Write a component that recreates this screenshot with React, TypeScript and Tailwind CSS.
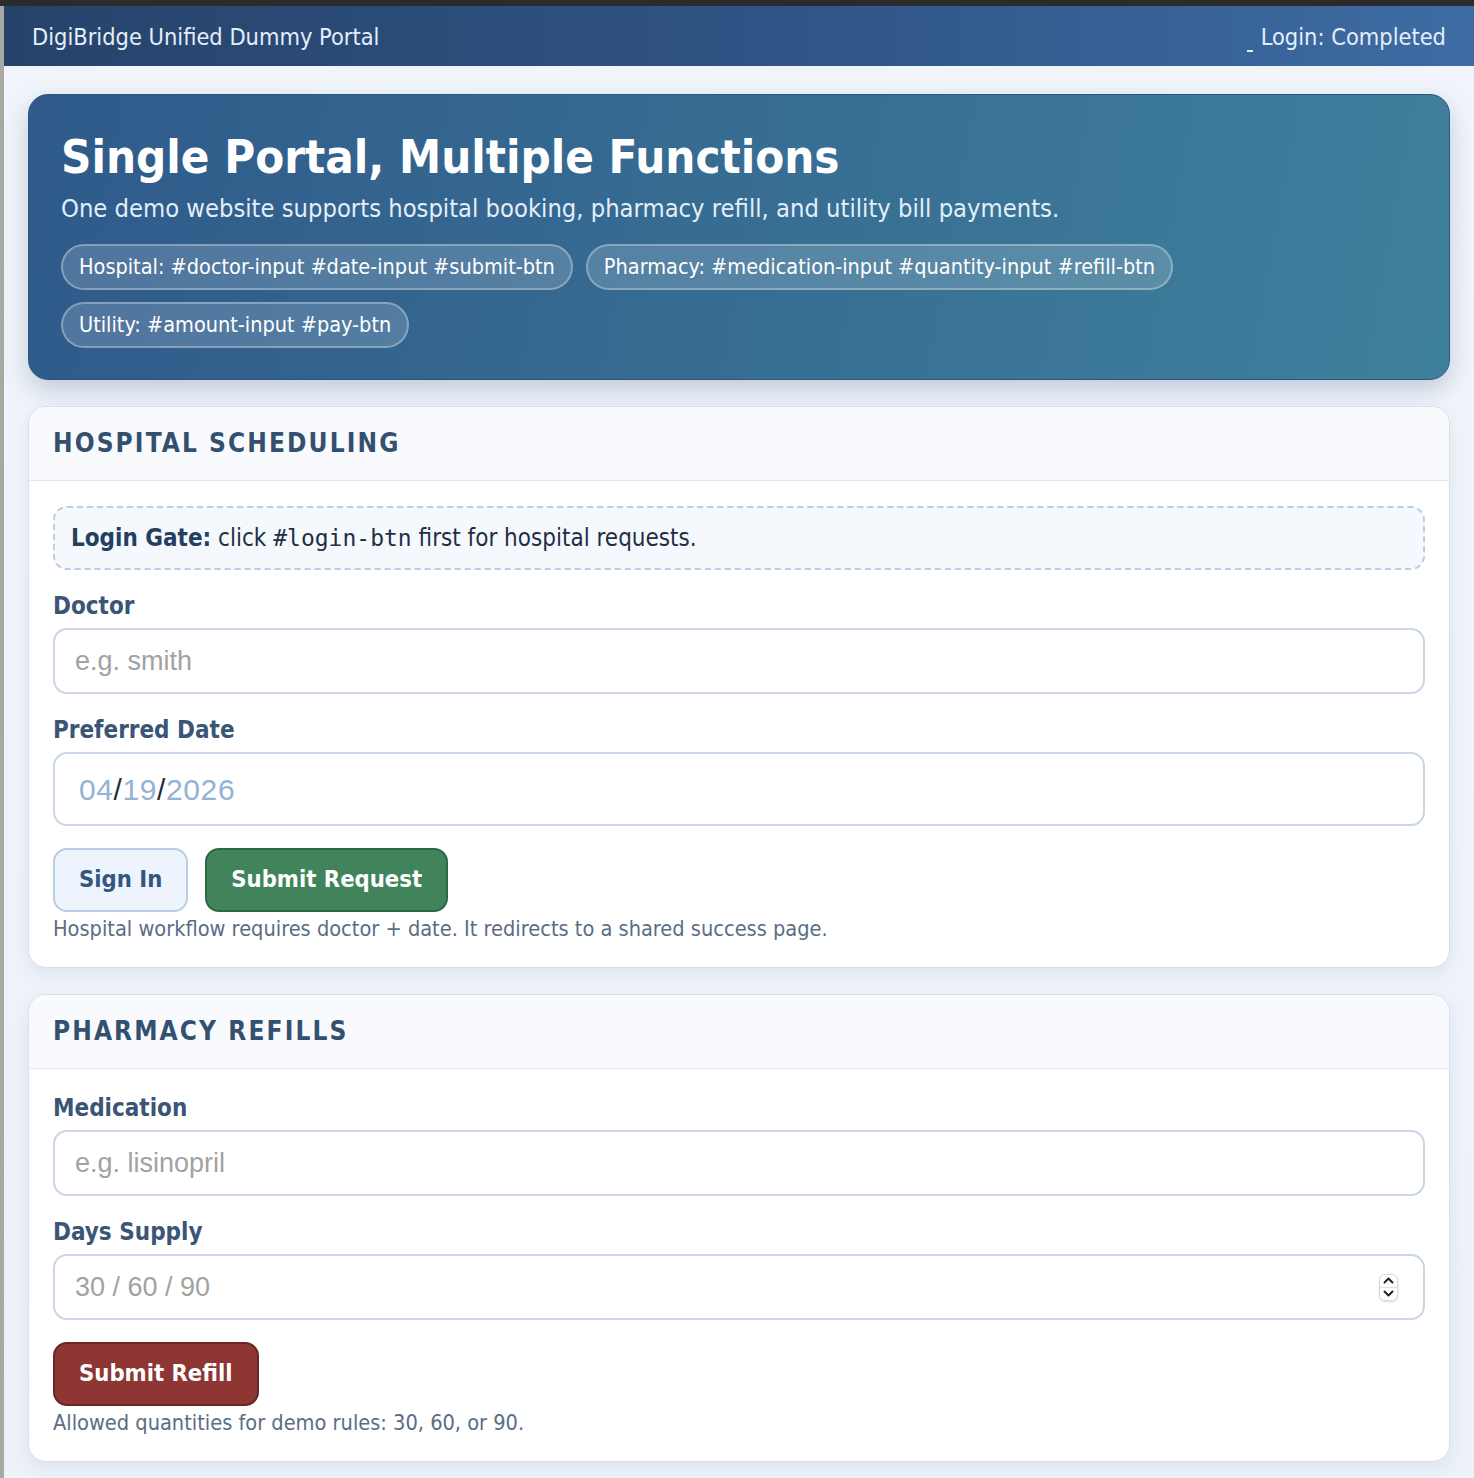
import { useState } from 'react';

const pills = [
  'Hospital: #doctor-input #date-input #submit-btn',
  'Pharmacy: #medication-input #quantity-input #refill-btn',
  'Utility: #amount-input #pay-btn',
];

function SectionCard({ title, bodyTop, children }: { title: string; bodyTop: string; children: React.ReactNode }) {
  return (
    <section className="rounded-[18px] border border-[#d6e0ec] bg-white shadow-[0_6px_18px_rgba(30,60,100,0.08)] overflow-hidden">
      <div className="h-[74px] flex items-center px-6 bg-[#f8fafd] border-b border-[#e0e8f1]">
        <h2 className="text-[26px] font-bold tracking-[2.1px] text-[#33506f] uppercase">{title}</h2>
      </div>
      <div className={`px-6 pb-6 flex flex-col ${bodyTop}`}>{children}</div>
    </section>
  );
}

function Field({ label, children }: { label: string; children: React.ReactNode }) {
  return (
    <div className="flex flex-col gap-[7px]">
      <label className="text-[24px] leading-[30px] font-bold text-[#3a5576]">{label}</label>
      {children}
    </div>
  );
}

function TextInput({ placeholder }: { placeholder: string }) {
  const [value, setValue] = useState('');
  return (
    <input
      value={value}
      onChange={(e) => setValue(e.target.value)}
      placeholder={placeholder}
      className="h-[66px] w-full rounded-[14px] border-2 border-[#c9d6e6] bg-white px-5 text-[27px] font-['Liberation_Sans',sans-serif] text-[#1f2d3d] placeholder:text-[#a2a2a2] outline-none"
    />
  );
}

function Spinner() {
  return (
    <div className="w-[19px] h-[27px] rounded-[6px] border border-[#dcdcdc] bg-white shadow-[0_1px_2px_rgba(0,0,0,0.15)] flex flex-col">
      <div className="flex-1 flex items-center justify-center border-b border-[#e2e2e2]">
        <svg width="11" height="7" viewBox="0 0 11 7" fill="none">
          <path d="M1.5 5.5 L5.5 1.5 L9.5 5.5" stroke="#222" strokeWidth="2" strokeLinecap="round" strokeLinejoin="round" />
        </svg>
      </div>
      <div className="flex-1 flex items-center justify-center">
        <svg width="11" height="7" viewBox="0 0 11 7" fill="none">
          <path d="M1.5 1.5 L5.5 5.5 L9.5 1.5" stroke="#222" strokeWidth="2" strokeLinecap="round" strokeLinejoin="round" />
        </svg>
      </div>
    </div>
  );
}

export default function App() {
  return (
    <div className="min-h-[1478px] bg-[#2b2b2b] pt-[6px] font-['DejaVu_Sans_Condensed','DejaVu_Sans',sans-serif]">
      <div className="min-h-[1472px] border-l-4 border-[#a9a9a3] bg-[linear-gradient(180deg,#f1f5fb_0%,#edf2f8_100%)]">
        {/* top bar */}
        <header className="h-[60px] flex items-center justify-between pl-7 pr-7 pt-[3px] bg-[linear-gradient(90deg,#26436a_0%,#2f5384_50%,#3e6ca3_100%)] text-[#e4eefa]">
          <span className="text-[23.4px]">DigiBridge Unified Dummy Portal</span>
          <div className="flex items-end">
            <span className="w-[6px] h-[2px] bg-[#e4eefa] mr-2 mb-[3px]" />
            <span className="text-[23.4px]">Login: Completed</span>
          </div>
        </header>

        <main className="px-6 pt-7 pb-4 flex flex-col gap-[26px]">
          {/* hero */}
          <div className="rounded-[20px] bg-[linear-gradient(100deg,#2f5a8a_0%,#376d93_50%,#3f809c_100%)] border border-[#2c5680] shadow-[0_10px_24px_rgba(30,60,100,0.22)] px-8 pt-[33px] pb-[31px] text-white">
            <h1 className="text-[47px] leading-[58px] font-bold">Single Portal, Multiple Functions</h1>
            <p className="text-[25.3px] leading-[32px] text-[#e3eef9] mt-[7px]">
              One demo website supports hospital booking, pharmacy refill, and utility bill payments.
            </p>
            <div className="flex flex-wrap gap-x-[13px] gap-y-3 mt-[19px]">
              {pills.map((p) => (
                <span
                  key={p}
                  className="h-[46px] inline-flex items-center rounded-full border-2 border-[rgba(255,255,255,0.3)] bg-[rgba(255,255,255,0.16)] px-4 text-[21.5px] text-white"
                >
                  {p}
                </span>
              ))}
            </div>
          </div>

          <SectionCard title="Hospital Scheduling" bodyTop="pt-[25px]">
            <div className="h-[64px] flex items-center rounded-[14px] border-2 border-dashed border-[#bccfe2] bg-[#f5f9fe] px-4 text-[24px] text-[#1f2f44]">
              <span>
                <b className="text-[#23405f]">Login Gate:</b> click{' '}
                <code className="font-['DejaVu_Sans_Mono',monospace] text-[23px]">#login-btn</code> first for hospital
                requests.
              </span>
            </div>
            <div className="mt-[21px]">
              <Field label="Doctor">
                <TextInput placeholder="e.g. smith" />
              </Field>
            </div>
            <div className="mt-[21px]">
              <Field label="Preferred Date">
                <div className="h-[74px] flex items-center rounded-[14px] border-2 border-[#c9d6e6] bg-white px-6 text-[30px] tracking-[0.6px] font-['Liberation_Sans',sans-serif]">
                  <span className="text-[#93b2d5]">04</span>
                  <span className="text-[#1f2d3d]">/</span>
                  <span className="text-[#93b2d5]">19</span>
                  <span className="text-[#1f2d3d]">/</span>
                  <span className="text-[#93b2d5]">2026</span>
                </div>
              </Field>
            </div>
            <div className="mt-[22px] flex gap-[17px]">
              <button className="h-[64px] px-6 rounded-[14px] border-2 border-[#b9cde6] bg-[#edf4fe] text-[23.6px] font-bold text-[#33567f]">
                Sign In
              </button>
              <button className="h-[64px] px-6 rounded-[14px] border-2 border-[#2d6845] bg-[#41845b] text-[23.6px] font-bold text-white">
                Submit Request
              </button>
            </div>
            <p className="mt-[3px] text-[21.6px] leading-[28px] text-[#5a6d85]">
              Hospital workflow requires doctor + date. It redirects to a shared success page.
            </p>
          </SectionCard>

          <SectionCard title="Pharmacy Refills" bodyTop="pt-6">
            <Field label="Medication">
              <TextInput placeholder="e.g. lisinopril" />
            </Field>
            <div className="mt-[21px]">
              <Field label="Days Supply">
                <div className="h-[66px] flex items-center justify-between rounded-[14px] border-2 border-[#c9d6e6] bg-white pl-5 pr-[25px]">
                  <span className="text-[27px] font-['Liberation_Sans',sans-serif] text-[#a2a2a2]">30 / 60 / 90</span>
                  <Spinner />
                </div>
              </Field>
            </div>
            <div className="mt-[22px] flex">
              <button className="h-[64px] px-6 rounded-[14px] border-2 border-[#6b2624] bg-[#8e3633] text-[23.6px] font-bold text-white">
                Submit Refill
              </button>
            </div>
            <p className="mt-[3px] text-[21.6px] leading-[28px] text-[#5a6d85]">
              Allowed quantities for demo rules: 30, 60, or 90.
            </p>
          </SectionCard>
        </main>
      </div>
    </div>
  );
}
